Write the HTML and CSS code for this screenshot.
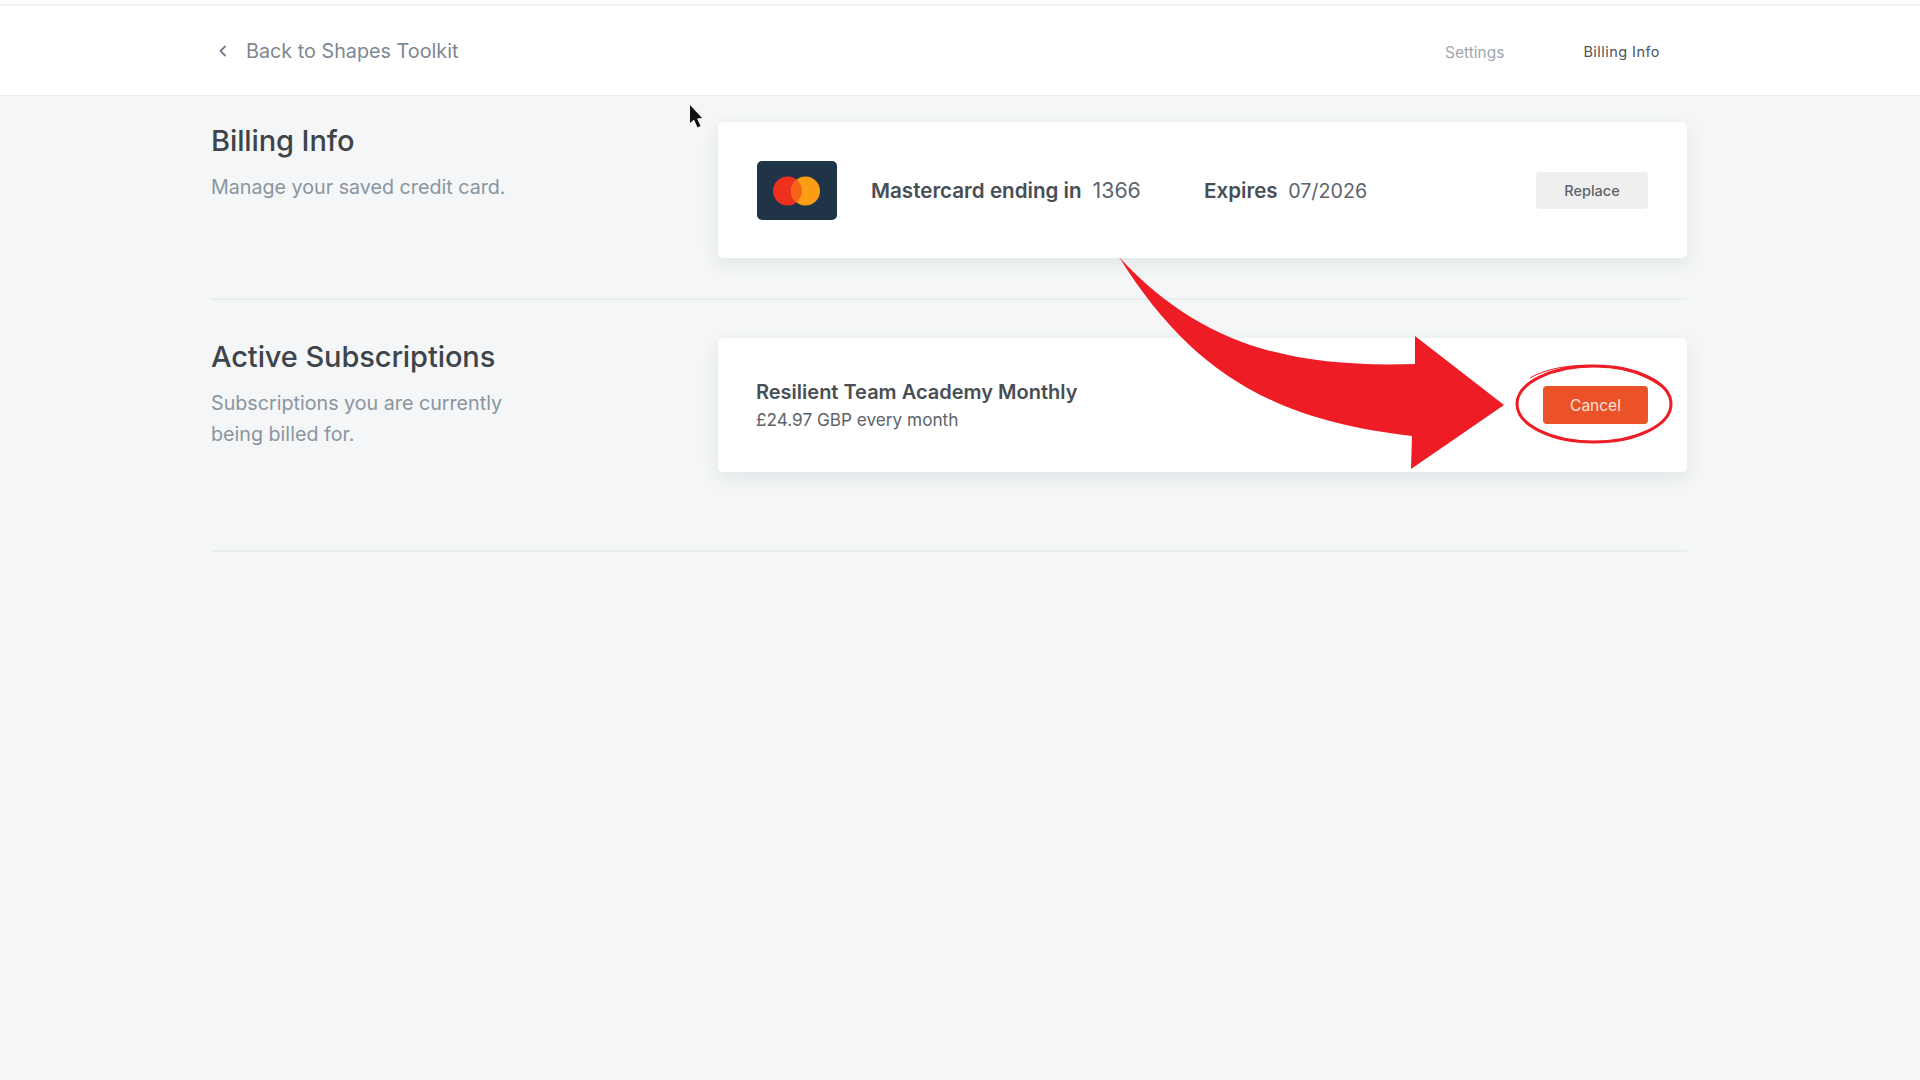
FILE: index.html
```html
<!DOCTYPE html>
<html lang="en">
<head>
  <meta charset="UTF-8">
  <title>Billing Info</title>
  <meta name="viewport" content="width=device-width, initial-scale=1.0">
  <link rel="stylesheet" href="styles.css">
</head>
<body>
  <header class="topbar">
    <div class="topbar-inner">
      <a class="back-link" href="#">
        <svg class="back-icon" width="10" height="14" viewBox="0 0 10 14"><path d="M7.5 2 L2.5 7 L7.5 12" fill="none" stroke="#6f7b86" stroke-width="1.8"/></svg>
        Back to Shapes Toolkit
      </a>
      <nav class="topnav">
        <a class="nav-link" href="#">Settings</a>
        <a class="nav-link active" href="#">Billing Info</a>
      </nav>
    </div>
  </header>

  <main class="content">
    <section class="section first">
      <div class="section-info">
        <h2>Billing Info</h2>
        <p>Manage your saved credit card.</p>
      </div>
      <div class="card card-billing">
        <svg class="card-logo" width="80" height="59" viewBox="0 0 80 59">
          <rect width="80" height="59" rx="5" fill="#203448"/>
          <circle cx="30.5" cy="30" r="14.5" fill="#f0301f"/>
          <circle cx="48.5" cy="30" r="14.5" fill="#fb9d14"/>
          <path d="M39.5 18.7 a14.5 14.5 0 0 1 0 22.6 a14.5 14.5 0 0 1 0 -22.6z" fill="#f5631b"/>
        </svg>
        <div class="card-number"><b>Mastercard ending in</b> 1366</div>
        <div class="card-expiry"><b>Expires</b> 07/2026</div>
        <button class="btn btn-grey">Replace</button>
      </div>
    </section>

    <section class="section">
      <div class="section-info">
        <h2>Active Subscriptions</h2>
        <p>Subscriptions you are currently<br>being billed for.</p>
      </div>
      <div class="card card-sub">
        <div class="sub-text">
          <div class="sub-name">Resilient Team Academy Monthly</div>
          <div class="sub-price">£24.97 GBP every month</div>
        </div>
        <button class="btn btn-cancel">Cancel</button>
      </div>
    </section>
  </main>

  <!-- annotation drawn over the screenshot -->
  <svg class="annotation" width="1920" height="1080" viewBox="0 0 1920 1080">
    <path d="M1119 257 C1200 345 1290 368 1415 364 L1415 336 L1504 405 L1411 469 L1412 436 C1270 420 1190 370 1119 257z" fill="#ee1c25"/>
    <ellipse cx="1594" cy="404" rx="77" ry="38" fill="none" stroke="#ee1c25" stroke-width="3"/>
    <path d="M1530 378 C1560 360 1630 358 1668 392" fill="none" stroke="#ee1c25" stroke-width="1"/>
    <path d="M690 105 L690 123 L694 119.5 L697.5 127.5 L700.5 126 L697 118.5 L702 118z" fill="#111"/>
  </svg>
</body>
</html>
```

FILE: styles.css
```css
* { box-sizing: border-box; }
body { margin: 0; min-height: 1080px; background: #f4f6f7; color: #3d444b; font-family: Inter, "Open Sans", Arial, sans-serif; }
a { text-decoration: none; }

.topbar { height: 92px; margin-top: 4px; background: #fff; border-top: 2px solid #f0f2f4; border-bottom: 1px solid #e9ecee; box-shadow: 0 -4px 0 #fcfcfd; }
.topbar-inner { width: 1476px; margin-left: 211px; height: 100%; display: flex; align-items: center; justify-content: space-between; padding-right: 27px; }
.back-link { display: flex; align-items: center; gap: 18px; padding-left: 7px; color: #7d8792; font-size: 19.8px; }
.topnav { display: flex; gap: 79px; padding-top: 4px; }
.nav-link { color: #a0a8af; font-size: 15.5px; }
.nav-link.active { color: #4c535a; font-size: 14.5px; letter-spacing: 0.45px; }

.content { width: 1476px; margin-left: 211px; }
.section { display: grid; grid-template-columns: 507px 969px; padding-top: 38px; padding-bottom: 78px; border-bottom: 2px solid #ebeeef; }
.section.first { padding-top: 26px; padding-bottom: 40px; }
.section-info h2 { margin: 1px 0 0; font-size: 29px; line-height: 36px; font-weight: 500; color: #3d444b; letter-spacing: -0.1px; }
.section-info p { margin: 13px 0 0; font-size: 19.7px; line-height: 31px; color: #8a95a0; }

.card { background: #fff; border-radius: 5px; box-shadow: 0 6px 18px rgba(60, 70, 80, 0.09); display: flex; align-items: center; }
.card-billing { height: 136px; padding: 0 39px; font-size: 19.7px; color: #5b636b; }
.card-logo { flex: none; margin-right: 34px; }
.card-number { width: 333px; font-size: 21.3px; }
.card-expiry { flex: 1; }
.card-billing b { font-size: 20.6px; font-weight: 600; color: #474e55; margin-right: 5px; }

.card-sub { height: 134px; padding: 0 39px 0 38px; justify-content: space-between; }
.sub-name { font-size: 20px; line-height: 26px; font-weight: 600; color: #474e55; }
.sub-price { font-size: 17.2px; line-height: 22px; margin-top: 4px; color: #5b636b; }

.btn { border: none; border-radius: 4px; font-family: inherit; cursor: pointer; }
.btn-grey { width: 112px; height: 37px; background: #efefef; color: #5b636b; font-size: 14.5px; font-weight: 500; }
.btn-cancel { width: 105px; height: 38px; background: #ec5228; color: #fbe3dc; font-size: 15.5px; }

.annotation { position: absolute; left: 0; top: 0; pointer-events: none; }
```
